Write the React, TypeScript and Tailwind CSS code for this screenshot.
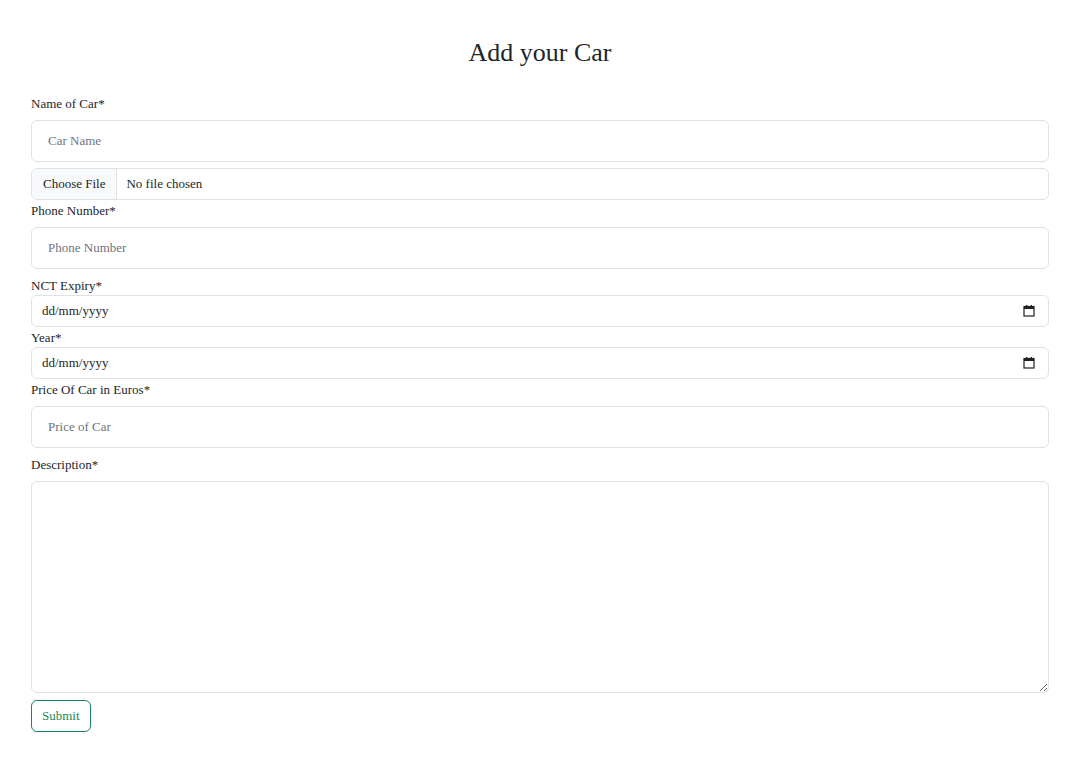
const serif = { fontFamily: '"Liberation Serif", "DejaVu Serif", serif' };

function Label({ children }: { children: React.ReactNode }) {
  return <label className="block h-5 text-[13px] leading-[22px] text-[#212529]">{children}</label>;
}

function TextInput({ placeholder }: { placeholder: string }) {
  return (
    <input
      type="text"
      placeholder={placeholder}
      className="mt-[7px] mb-[6px] block h-[42px] w-full rounded-md border border-[#dee2e6] bg-white px-4 text-[13px] text-[#212529] placeholder:text-[#6c757d] focus:outline-none"
      style={serif}
    />
  );
}

function CalendarIcon() {
  return (
    <svg width="12" height="12" viewBox="0 0 12 12" className="text-[#202020]">
      <rect x="1" y="1.5" width="10" height="9.5" fill="none" stroke="currentColor" strokeWidth="1.2" />
      <rect x="1" y="1.5" width="10" height="2.5" fill="currentColor" />
      <rect x="3" y="0" width="1.3" height="2" fill="currentColor" />
      <rect x="7.7" y="0" width="1.3" height="2" fill="currentColor" />
    </svg>
  );
}

function DateInput() {
  return (
    <div className="flex h-8 w-full items-center justify-between rounded-md border border-[#dee2e6] bg-white pl-[10px] pr-[13px] text-[13px] text-[#212529]">
      <span>dd/mm/yyyy</span>
      <CalendarIcon />
    </div>
  );
}

export default function App() {
  return (
    <div className="min-h-screen bg-white text-[#212529]" style={serif}>
      <div className="ml-[31px] w-[1018px] pt-[37px]">
        <h2 className="h-[32px] text-center text-[26px] leading-[32px]">Add your Car</h2>

        <form className="mt-[24px]">
          <Label>Name of Car*</Label>
          <TextInput placeholder="Car Name" />

          <div className="flex h-8 w-full items-stretch overflow-hidden rounded-md border border-[#dee2e6] text-[13px]">
            <span className="flex items-center border-r border-[#dee2e6] bg-[#f8f9fa] px-[11px]">Choose File</span>
            <span className="flex items-center px-[9px]">No file chosen</span>
          </div>

          <Label>Phone Number*</Label>
          <TextInput placeholder="Phone Number" />

          <Label>NCT Expiry*</Label>
          <DateInput />

          <Label>Year*</Label>
          <DateInput />

          <Label>Price Of Car in Euros*</Label>
          <TextInput placeholder="Price of Car" />

          <Label>Description*</Label>
          <textarea
            className="mt-[7px] block h-[212px] w-full resize-y rounded-md border border-[#dee2e6] bg-white px-4 py-2 text-[13px] focus:outline-none"
            style={serif}
          />

          <button
            type="button"
            className="mt-[7px] h-8 rounded-md border border-[#198754] px-[10px] text-[13px] text-[#198754]"
          >
            Submit
          </button>
        </form>
      </div>
    </div>
  );
}
